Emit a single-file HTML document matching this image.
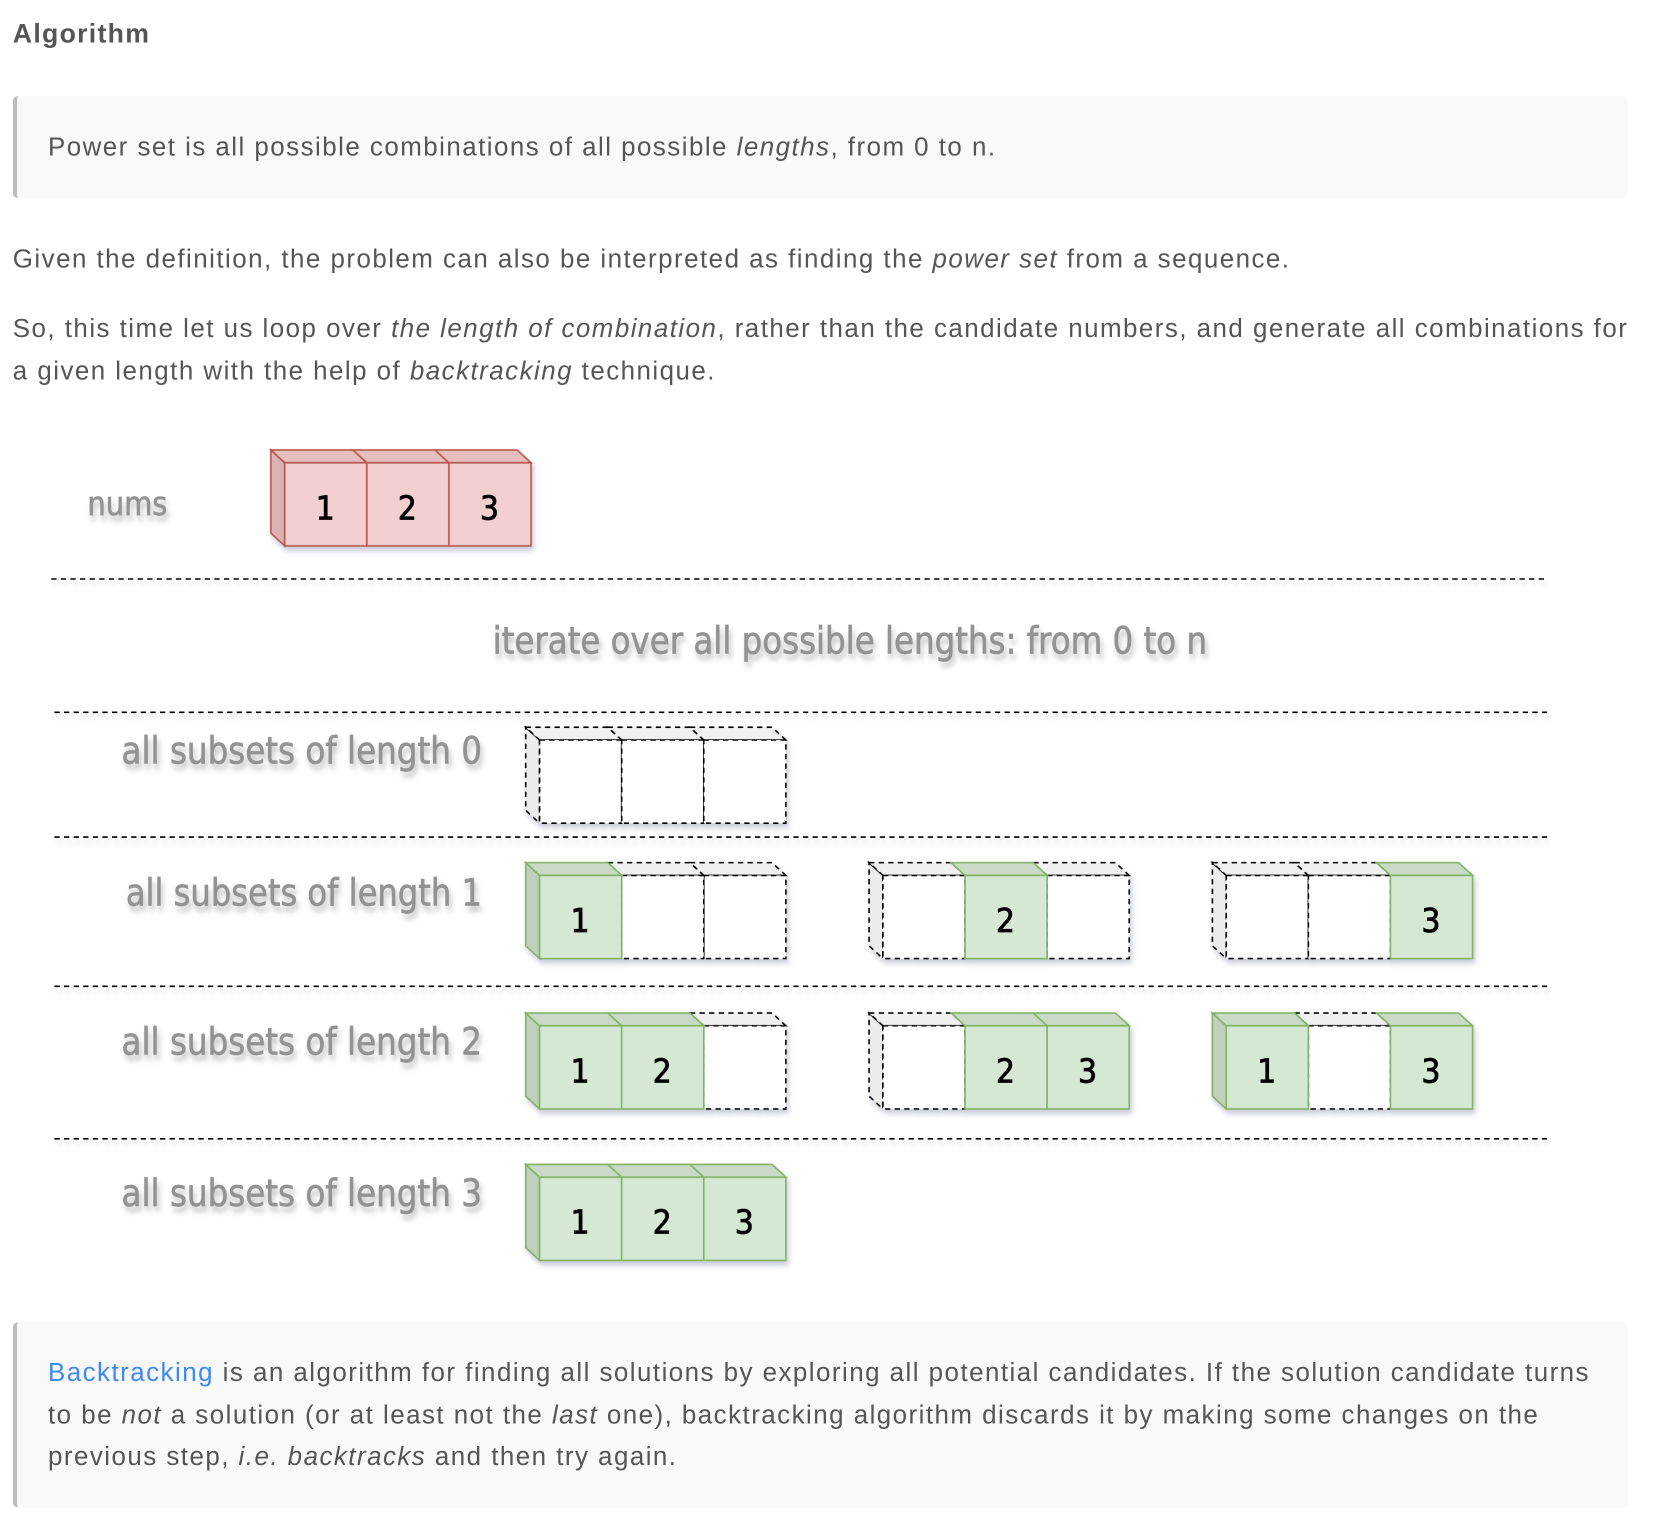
<!DOCTYPE html>
<html><head><meta charset="utf-8">
<style>
html,body{margin:0;padding:0;background:#fff;width:1672px;height:1526px;overflow:hidden}
#w{position:absolute;left:0;top:0;width:1568px;height:1431px;transform:scale(1.0663);transform-origin:0 0;font-family:"Liberation Sans",Helvetica,Arial,sans-serif;color:#555;font-size:24.3px;letter-spacing:1.38px}
.a{position:absolute;white-space:nowrap}
.bq{position:absolute;left:12px;width:1511px;background:#f9f9f9;border-left:4px solid #bdbdbd;border-radius:5px}
a{color:#3d8af7;text-decoration:none}
svg{position:absolute;left:0;top:0;letter-spacing:0}
</style></head><body>
<div id="w">
<div class="a" style="left:12px;top:18px;font-weight:bold;font-size:25px;letter-spacing:1.2px;color:#555">Algorithm</div>
<div class="bq" style="top:90px;height:96px"></div>
<div class="a" style="left:45px;top:125px">Power set is all possible combinations of all possible <i>lengths</i>, from 0 to n.</div>
<div class="a" style="left:12px;top:230px">Given the definition, the problem can also be interpreted as finding the <i>power set</i> from a sequence.</div>
<div class="a" style="left:12px;top:289px;line-height:40px">So, this time let us loop over <i>the length of combination</i>, rather than the candidate numbers, and generate all combinations for<br>a given length with the help of <i>backtracking</i> technique.</div>

<svg width="1568" height="1431" viewBox="0 0 1568 1431">
<defs>
<filter id="sh" x="-10%" y="-20%" width="130%" height="160%"><feDropShadow dx="2" dy="4" stdDeviation="2.5" flood-color="#8a90a8" flood-opacity="0.45"/></filter>
<filter id="ts" x="-10%" y="-30%" width="130%" height="190%"><feDropShadow dx="2" dy="5" stdDeviation="2.5" flood-color="#777" flood-opacity="0.45"/></filter>
<g id="rc"><polygon points="-13,-12 64,-12 77,0 0,0" fill="#e6bfbe" stroke="#b85450" stroke-width="1.5"/><rect x="0" y="0" width="77" height="78" fill="#f2d0cf" stroke="#b85450" stroke-width="1.5"/></g>
<g id="rs"><polygon points="-13,-12 0,0 0,78 -13,66" fill="#dcb3b2" stroke="#b85450" stroke-width="1.5"/></g>
<g id="gc"><polygon points="-13,-12 64,-12 77,0 0,0" fill="#c9dbc6" stroke="#82b366" stroke-width="1.5"/><rect x="0" y="0" width="77" height="78" fill="#d5e8d4" stroke="#82b366" stroke-width="1.5"/></g>
<g id="gs"><polygon points="-13,-12 0,0 0,78 -13,66" fill="#bfd1bb" stroke="#82b366" stroke-width="1.5"/></g>
<g id="dc"><polygon points="-13,-12 64,-12 77,0 0,0" fill="#f0f0f0" stroke="#000" stroke-width="1.5" stroke-dasharray="5 4"/><rect x="0" y="0" width="77" height="78" fill="#fff" stroke="#000" stroke-width="1.5" stroke-dasharray="5 4"/></g>
<g id="ds"><polygon points="-13,-12 0,0 0,78 -13,66" fill="#ececec" stroke="#000" stroke-width="1.5" stroke-dasharray="5 4"/></g>
</defs>
<g stroke="#000" stroke-width="1.5" stroke-dasharray="5 4" filter="url(#sh)">
<line x1="48" y1="543" x2="1448" y2="543"/>
<line x1="51" y1="668" x2="1452" y2="668"/>
<line x1="51" y1="785" x2="1452" y2="785"/>
<line x1="51" y1="925" x2="1452" y2="925"/>
<line x1="51" y1="1068" x2="1452" y2="1068"/>
</g>
<g font-family="'DejaVu Sans Condensed','DejaVu Sans',sans-serif" fill="#939393" filter="url(#ts)" font-size="35" stroke="#939393" stroke-width="0.6">
<text x="82" y="483" font-size="31" textLength="75" lengthAdjust="spacingAndGlyphs">nums</text>
<text x="462" y="613" textLength="670" lengthAdjust="spacingAndGlyphs">iterate over all possible lengths: from 0 to n</text>
<text x="114" y="716" textLength="338" lengthAdjust="spacingAndGlyphs">all subsets of length 0</text>
<text x="118" y="849" textLength="334" lengthAdjust="spacingAndGlyphs">all subsets of length 1</text>
<text x="114" y="989" textLength="338" lengthAdjust="spacingAndGlyphs">all subsets of length 2</text>
<text x="114" y="1131" textLength="338" lengthAdjust="spacingAndGlyphs">all subsets of length 3</text>
</g>
<g filter="url(#sh)">
<g transform="translate(267,434)"><use href="#rs"/><use href="#rc"/><use href="#rc" x="77"/><use href="#rc" x="154"/></g>
<g transform="translate(506,694)"><use href="#ds"/><use href="#dc"/><use href="#dc" x="77"/><use href="#dc" x="154"/></g>
<g transform="translate(506,821)"><use href="#gs"/><use href="#dc" x="154"/><use href="#dc" x="77"/><use href="#gc"/></g>
<g transform="translate(828,821)"><use href="#ds"/><use href="#dc"/><use href="#dc" x="154"/><use href="#gc" x="77"/></g>
<g transform="translate(1150,821)"><use href="#ds"/><use href="#dc"/><use href="#dc" x="77"/><use href="#gc" x="154"/></g>
<g transform="translate(506,962)"><use href="#gs"/><use href="#dc" x="154"/><use href="#gc"/><use href="#gc" x="77"/></g>
<g transform="translate(828,962)"><use href="#ds"/><use href="#dc"/><use href="#gc" x="77"/><use href="#gc" x="154"/></g>
<g transform="translate(1150,962)"><use href="#gs"/><use href="#dc" x="77"/><use href="#gc"/><use href="#gc" x="154"/></g>
<g transform="translate(506,1104)"><use href="#gs"/><use href="#gc"/><use href="#gc" x="77"/><use href="#gc" x="154"/></g>
</g>
<g font-family="'DejaVu Sans Condensed','DejaVu Sans',sans-serif" font-size="31" fill="#000" stroke="#000" stroke-width="0.8" text-anchor="middle">
<text x="305" y="487">1</text><text x="382" y="487">2</text><text x="459" y="487">3</text>
<text x="544" y="874">1</text><text x="943" y="874">2</text><text x="1342" y="874">3</text>
<text x="544" y="1015">1</text><text x="621" y="1015">2</text><text x="943" y="1015">2</text><text x="1020" y="1015">3</text><text x="1188" y="1015">1</text><text x="1342" y="1015">3</text>
<text x="544" y="1157">1</text><text x="621" y="1157">2</text><text x="698" y="1157">3</text>
</g>
</svg>

<div class="bq" style="top:1240px;height:174px"></div>
<div class="a" style="left:45px;top:1268px;line-height:39.5px">
<a>Backtracking</a> is an algorithm for finding all solutions by exploring all potential candidates. If the solution candidate turns<br>to be <i>not</i> a solution (or at least not the <i>last</i> one), backtracking algorithm discards it by making some changes on the<br>previous step, <i>i.e.</i> <i>backtracks</i> and then try again.</div>
</div>
</body></html>
